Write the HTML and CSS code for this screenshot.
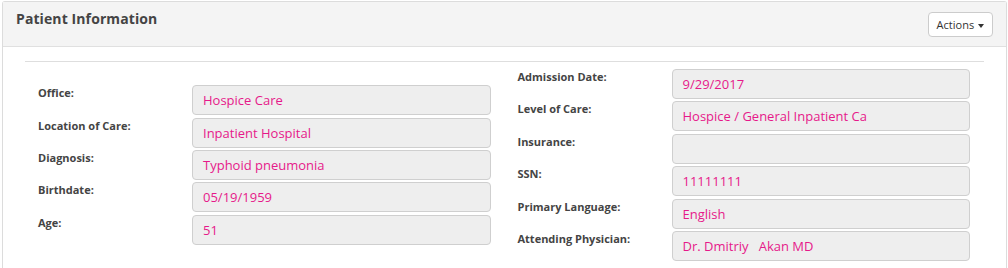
FILE: index.html
```html
<!DOCTYPE html>
<html>
<head>
  <meta charset="UTF-8">
  <title>Patient Information</title>
  <link rel="stylesheet" href="styles.css">
</head>
<body>
  <div class="panel">
    <div class="panel-heading">
      <h3 class="panel-title">Patient Information</h3>
      <button class="btn-actions">Actions <span class="caret"></span></button>
    </div>
    <div class="panel-body">
      <hr>
      <div class="columns">

        <div class="col">
          <div class="field">
            <div class="field-label">Office:</div>
            <div class="field-value">Hospice Care</div>
          </div>
          <div class="field">
            <div class="field-label">Location of Care:</div>
            <div class="field-value">Inpatient Hospital</div>
          </div>
          <div class="field">
            <div class="field-label">Diagnosis:</div>
            <div class="field-value">Typhoid pneumonia</div>
          </div>
          <div class="field">
            <div class="field-label">Birthdate:</div>
            <div class="field-value">05/19/1959</div>
          </div>
          <div class="field">
            <div class="field-label">Age:</div>
            <div class="field-value">51</div>
          </div>
        </div>

        <div class="col">
          <div class="field">
            <div class="field-label">Admission Date:</div>
            <div class="field-value">9/29/2017</div>
          </div>
          <div class="field">
            <div class="field-label">Level of Care:</div>
            <div class="field-value">Hospice / General Inpatient Ca</div>
          </div>
          <div class="field">
            <div class="field-label">Insurance:</div>
            <div class="field-value"></div>
          </div>
          <div class="field">
            <div class="field-label">SSN:</div>
            <div class="field-value">11111111</div>
          </div>
          <div class="field">
            <div class="field-label">Primary Language:</div>
            <div class="field-value">English</div>
          </div>
          <div class="field">
            <div class="field-label">Attending Physician:</div>
            <div class="field-value">Dr. Dmitriy   Akan MD</div>
          </div>
        </div>

      </div>
    </div>
  </div>
</body>
</html>
```

FILE: styles.css
```css
body {
  margin: 1px 1px 0 2px;
  background-color: #fff;
  font-family: "Open Sans", "Liberation Sans", sans-serif;
  color: #444;
}

.panel
{
  border: 1px solid #dcdcdc;
  border-bottom: none;
  border-radius: 3px 3px 0 0;
  height: 267px;
  box-sizing: border-box;
}

.panel-heading
{
  display: flex;
  justify-content: space-between;
  align-items: flex-start;
  height: 45px;
  padding: 7px 13px 0 13px;
  box-sizing: border-box;
  background-color: #f4f4f4;
  border-bottom: 1px solid #e0e0e0;
}

.panel-title
{
  margin: 0;
  font-size: 14px;
  font-weight: bold;
  color: #444;
  letter-spacing: 0.1px;
}

.btn-actions
{
  margin-top: 3px;
  height: 25px;
  padding: 0 8px;
  font-family: inherit;
  font-size: 11px;
  color: #333;
  background: #fff;
  border: 1px solid #ccc;
  border-radius: 4px;
}

.caret
{
  display: inline-block;
  width: 0;
  height: 0;
  margin-left: 1px;
  vertical-align: middle;
  border-top: 4px solid #333;
  border-left: 3.5px solid transparent;
  border-right: 3.5px solid transparent;
}

.panel-body
{
  padding: 14px 22px 0 22px;
}

hr
{
  margin: 0 0 7px 0;
  border: none;
  border-top: 1px solid #dedede;
}

.columns
{
  display: flex;
  align-items: center;
}

.col
{
  flex: 1;
  display: flex;
  flex-direction: column;
  gap: 2.4px;
  padding: 0 14px 0 13px;
}

.field
{
  display: grid;
  grid-template-columns: 154px 1fr;
}

.field-label
{
  font-size: 11px;
  font-weight: bold;
  color: #444;
}

.field-value
{
  height: 30px;
  box-sizing: border-box;
  padding: 0 10px;
  font-size: 13px;
  line-height: 29px;
  color: #e6198a;
  background-color: #eee;
  border: 1px solid #cfcfcf;
  border-radius: 4px;
  white-space: pre;
}
```
